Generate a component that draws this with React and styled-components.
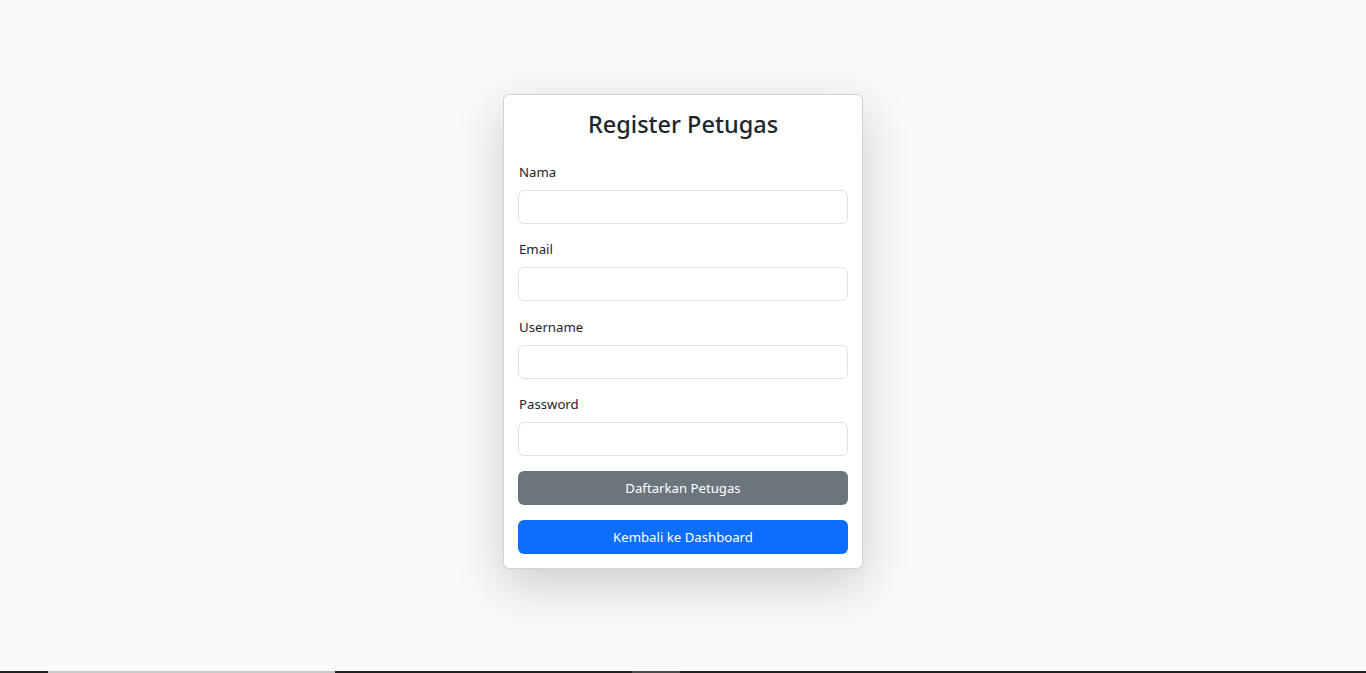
import styled, { createGlobalStyle } from "styled-components";

const GlobalStyle = createGlobalStyle`
  html, body {
    margin: 0;
    padding: 0;
    background: #f8f9fa;
    font-family: "Noto Sans", "Open Sans", sans-serif;
    color: #212529;
  }
  * { box-sizing: border-box; }
`;

const Page = styled.div`
  height: 100vh;
  display: flex;
  flex-direction: column;
`;

const Main = styled.main`
  flex: 1;
  display: flex;
  justify-content: center;
  align-items: flex-start;
  padding-top: 94px;
`;

const Card = styled.div`
  width: 360px;
  background: #fff;
  border: 1px solid rgba(0, 0, 0, 0.175);
  border-radius: 6px;
  box-shadow: 0 1rem 3rem rgba(0, 0, 0, 0.175);
  padding: 15px 14px 14px;
  display: flex;
  flex-direction: column;
`;

const Title = styled.h3`
  margin: 0 0 23px;
  text-align: center;
  font-size: 23.5px;
  font-weight: 500;
  line-height: 28.8px;
`;

const Group = styled.div`
  display: flex;
  flex-direction: column;
  margin-bottom: 15.4px;
`;

const Label = styled.label`
  font-size: 13.2px;
  line-height: 21px;
  margin-bottom: 7px;
  padding-left: 1px;
`;

const Input = styled.input`
  height: 34px;
  width: 100%;
  border: 1px solid #dee2e6;
  border-radius: 6px;
  padding: 4px 12px;
  font: inherit;
  font-size: 14px;
  background: #fff;
  outline: none;
`;

const Button = styled.button`
  height: 34px;
  width: 100%;
  border: none;
  border-radius: 6px;
  color: #fff;
  font-family: inherit;
  font-size: 13.2px;
  background: ${(props) => (props.variant === "primary" ? "#0d6efd" : "#6c757d")};
  margin-top: ${(props) => (props.spaced ? "15px" : "0")};
  cursor: pointer;
`;

const Taskbar = styled.div`
  height: 2px;
  display: flex;
  background: #202020;
`;

const Segment = styled.div`
  width: ${(props) => props.w}px;
  margin-left: ${(props) => props.left}px;
  background: ${(props) => props.color};
`;

const fields = [
  { label: "Nama", type: "text" },
  { label: "Email", type: "email" },
  { label: "Username", type: "text" },
  { label: "Password", type: "password" },
];

const App = () => {
  return (
    <>
      <GlobalStyle />
      <Page>
        <Main>
          <Card>
            <Title>Register Petugas</Title>
            {fields.map((f) => (
              <Group key={f.label}>
                <Label>{f.label}</Label>
                <Input type={f.type} />
              </Group>
            ))}
            <Button type="submit">Daftarkan Petugas</Button>
            <Button variant="primary" spaced>
              Kembali ke Dashboard
            </Button>
          </Card>
        </Main>
        <Taskbar>
          <Segment left={48} w={287} color="#c9c9c9" />
          <Segment left={297} w={48} color="#4a4a4a" />
        </Taskbar>
      </Page>
    </>
  );
};

export default App;
